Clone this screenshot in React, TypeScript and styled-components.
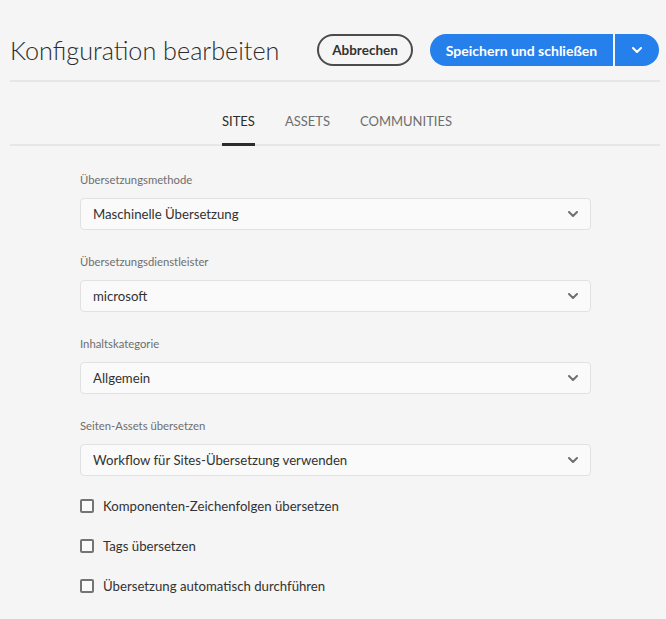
import React from 'react';
import styled, { createGlobalStyle } from 'styled-components';

const GlobalStyle = createGlobalStyle`
  html, body {
    margin: 0;
    padding: 0;
    background: #f5f5f5;
    font-family: Lato, "Open Sans", sans-serif;
    color: #323232;
  }
  * { box-sizing: border-box; }
`;

const Page = styled.div`
  min-height: 619px;
  padding: 0 6px 0 10px;
  background: #f5f5f5;
`;

// header with title and action buttons
const Header = styled.header`
  display: flex;
  align-items: center;
  justify-content: space-between;
  padding: 34px 1px 14px 0;
  border-bottom: 2px solid #e6e6e6;
`;

const Title = styled.h1`
  margin: 0;
  font-size: 25.2px;
  font-weight: 300;
  line-height: 32px;
  color: #2c2c2c;
`;

const Actions = styled.div`
  display: flex;
  align-items: center;
  gap: 17px;
`;

const QuietButton = styled.button`
  height: 32px;
  width: 96px;
  padding: 0;
  border: 2px solid #4b4b4b;
  border-radius: 16px;
  background: transparent;
  font-family: inherit;
  font-size: 13.5px;
  font-weight: 700;
  color: #323232;
`;

const SplitButton = styled.div`
  display: flex;
  height: 32px;
  gap: 2px;
`;

const CtaPart = styled.button<{ $side: 'left' | 'right' }>`
  height: 32px;
  border: none;
  background: #2680eb;
  color: #fff;
  font-family: inherit;
  font-size: 14px;
  font-weight: 700;
  padding: 0;
  width: ${p => (p.$side === 'left' ? '183px' : '44px')};
  border-radius: ${p => (p.$side === 'left' ? '16px 0 0 16px' : '0 16px 16px 0')};
  display: flex;
  align-items: center;
  justify-content: center;
  white-space: nowrap;
`;

// tabs
const TabList = styled.nav`
  display: flex;
  justify-content: center;
  gap: 30px;
  padding-left: 4px;
  border-bottom: 2px solid #e6e6e6;
`;

const Tab = styled.div<{ $active?: boolean }>`
  padding: 30px 0 13px;
  line-height: 18px;
  font-size: 13px;
  text-transform: uppercase;
  color: ${p => (p.$active ? '#2c2c2c' : '#6e6e6e')};
  border-bottom: 3px solid ${p => (p.$active ? '#2c2c2c' : 'transparent')};
  margin-bottom: -2px;
`;

// form
const Form = styled.div`
  width: 512px;
  margin: 0 auto;
  padding: 25px 0 0 1px;
  display: flex;
  flex-direction: column;
`;

const Field = styled.div`
  display: flex;
  flex-direction: column;
  gap: 9px;
  margin-bottom: 23px;
`;

const Label = styled.label`
  font-size: 11.3px;
  line-height: 18px;
  color: #6e6e6e;
`;

const Select = styled.div`
  height: 32px;
  display: flex;
  align-items: center;
  justify-content: space-between;
  padding: 0 12px 0 12px;
  background: #fafafa;
  border: 1px solid #e1e1e1;
  border-radius: 4px;
  font-size: 13.2px;
  color: #323232;
`;

const Checks = styled.div`
  display: flex;
  flex-direction: column;
  gap: 20px;
  margin-top: -3px;
`;

const CheckRow = styled.label`
  display: flex;
  align-items: center;
  height: 20px;
  gap: 9px;
  font-size: 13.2px;
  color: #323232;
`;

const Box = styled.span`
  width: 14px;
  height: 14px;
  border: 2px solid #747474;
  border-radius: 2px;
  background: #fafafa;
  flex-shrink: 0;
`;

const Chevron = ({ color }: { color: string }) => (
  <svg width="10" height="6" viewBox="0 0 10 6" fill="none">
    <path d="M1 1l4 4 4-4" stroke={color} strokeWidth="2" strokeLinecap="round" strokeLinejoin="round" />
  </svg>
);

const fields = [
  { label: 'Übersetzungsmethode', value: 'Maschinelle Übersetzung' },
  { label: 'Übersetzungsdienstleister', value: 'microsoft' },
  { label: 'Inhaltskategorie', value: 'Allgemein' },
  { label: 'Seiten-Assets übersetzen', value: 'Workflow für Sites-Übersetzung verwenden' },
];

const checks = [
  'Komponenten-Zeichenfolgen übersetzen',
  'Tags übersetzen',
  'Übersetzung automatisch durchführen',
];

export default function App() {
  return (
    <>
      <GlobalStyle />
      <Page>
        <Header>
          <Title>Konfiguration bearbeiten</Title>
          <Actions>
            <QuietButton>Abbrechen</QuietButton>
            <SplitButton>
              <CtaPart $side="left">Speichern und schließen</CtaPart>
              <CtaPart $side="right">
                <Chevron color="#fff" />
              </CtaPart>
            </SplitButton>
          </Actions>
        </Header>
        <TabList>
          <Tab $active>Sites</Tab>
          <Tab>Assets</Tab>
          <Tab>Communities</Tab>
        </TabList>
        <Form>
          {fields.map(f => (
            <Field key={f.label}>
              <Label>{f.label}</Label>
              <Select>
                <span>{f.value}</span>
                <Chevron color="#707070" />
              </Select>
            </Field>
          ))}
          <Checks>
            {checks.map(c => (
              <CheckRow key={c}>
                <Box />
                {c}
              </CheckRow>
            ))}
          </Checks>
        </Form>
      </Page>
    </>
  );
}
